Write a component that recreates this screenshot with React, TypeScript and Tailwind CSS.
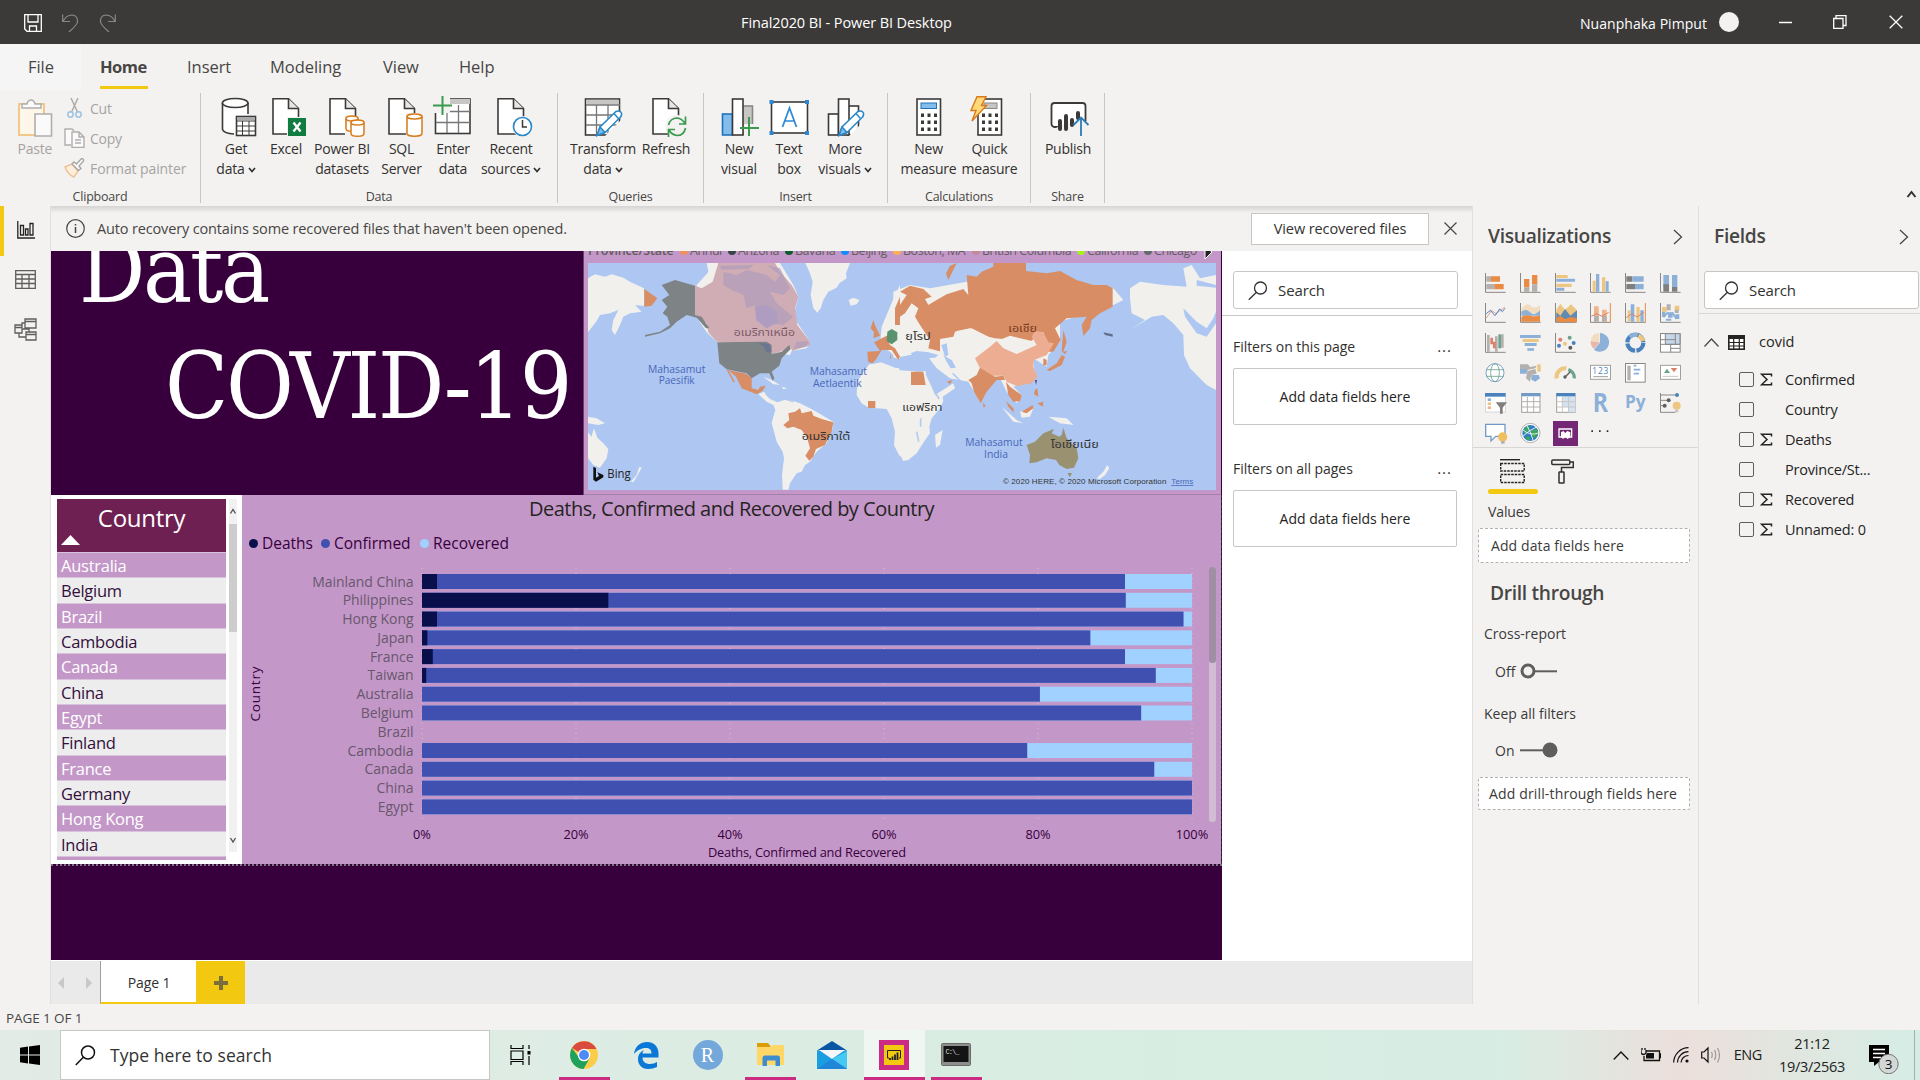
import React from "react";

type Kids = { children?: React.ReactNode };

/* ---------- ribbon ---------- */

const INK = "#3b3a39";

function Doc() {
  return (
    <g>
      <path d="M7 2.7H22.5L32.5 12.5V38H7Z" fill="#fff" stroke={INK} strokeWidth="1.6" />
      <path d="M22.5 2.7V12.5H32.5" fill="#e8e6e4" stroke={INK} strokeWidth="1.6" />
    </g>
  );
}

function Can({ x, y, w, h }: { x: number; y: number; w: number; h: number }) {
  return (
    <g fill="#fff" stroke="#d87a1a" strokeWidth="1.5">
      <path d={`M${x} ${y + 2.5}V${y + h - 2.5}a${w / 2} 2.8 0 0 0 ${w} 0V${y + 2.5}`} />
      <ellipse cx={x + w / 2} cy={y + 2.5} rx={w / 2} ry="2.5" />
    </g>
  );
}

function Pencil() {
  return (
    <g stroke="#2b88c8" strokeWidth="1.5">
      <path d="M14 39.5L17 31L33 15.5Q37 14 38.5 17Q39 20 37 21.5L22 36.5Z" fill="#fff" />
      <path d="M14 39.5L17 31L22 36.5Z" fill="#83bdec" />
      <path d="M31 17.5L35.5 22.5" />
    </g>
  );
}

const ribbonIcons: Record<string, React.ReactNode> = {
  get: (
    <g stroke={INK} strokeWidth="1.6">
      <path d="M6.5 7V33.5Q8 37.5 19 38H20V20H31.500V7" fill="#fff" stroke="none" />
      <path d="M6.500 7V33.500Q8 37.500 18 38M32 7V18" fill="none" />
      <ellipse cx="19.2" cy="7" rx="12.800" ry="4.500" fill="#fff" />
      <rect x="20.500" y="20.500" width="19" height="19" fill="#fff" />
      <rect x="21" y="21" width="18" height="3" fill="#aaa" stroke="none" />
      <path d="M20 25H40M20 30H40M20 35H40M26.500 25V40M33 25V40" strokeWidth="1" />
    </g>
  ),
  excel: (
    <g>
      <Doc />
      <rect x="21" y="21" width="20" height="20" fill="#f3f2f1" />
      <rect x="22" y="22" width="18" height="18" fill="#107c41" />
      <path d="M27.500 26.500L34.500 35.500M34.500 26.500L27.500 35.500" stroke="#fff" strokeWidth="2.300" />
    </g>
  ),
  sets: (
    <g transform="translate(1 0)">
      <Doc />
      <rect x="22" y="20" width="18" height="20" fill="#f3f2f1" />
      <Can x={23} y={20} w={12} h={15} />
      <Can x={28} y={24} w={13} h={16} />
    </g>
  ),
  sql: (
    <g>
      <Doc />
      <rect x="24" y="17" width="17" height="23" fill="#f3f2f1" />
      <Can x={25} y={18} w={15} h={22} />
    </g>
  ),
  enter: (
    <g>
      <rect x="2.500" y="3" width="34.500" height="34.500" fill="#fff" stroke={INK} strokeWidth="1.600" />
      <path d="M14 3H37V8H14Z" fill="#c8c6c4" />
      <path d="M3 15.500H37M3 26.500H37M14 9V37M25.500 9V37" stroke="#777" strokeWidth="1.300" />
      <path d="M0 0H17V17H0Z" fill="#f3f2f1" />
      <path d="M9.500 0V19M0 9.500H19" stroke="#3a9a4e" strokeWidth="2" />
    </g>
  ),
  recent: (
    <g>
      <Doc />
      <circle cx="31.500" cy="30.500" r="10.500" fill="#f3f2f1" />
      <circle cx="31.500" cy="30.500" r="9" fill="#fff" stroke="#2b88c8" strokeWidth="1.600" />
      <path d="M31.500 24V31H36" fill="none" stroke={INK} strokeWidth="1.500" />
    </g>
  ),
  transform: (
    <g>
      <rect x="2.500" y="3" width="34" height="36" fill="#fff" stroke={INK} strokeWidth="1.600" />
      <path d="M3.300 3.800H35.700V8.500H3.300Z" fill="#c8c6c4" />
      <path d="M3 9H37M3 19H37M3 29H37M13.500 9V39M25 9V39" stroke="#777" strokeWidth="1.300" />
      <path d="M22 40L40 22V40Z" fill="#f3f2f1" />
      <Pencil />
    </g>
  ),
  refresh: (
    <g>
      <Doc />
      <circle cx="31" cy="30.500" r="11.500" fill="#f3f2f1" />
      <g fill="none" stroke="#3a9a4e" strokeWidth="1.700">
        <path d="M22.500 29Q24.500 22 31 22Q36 22.500 39 27.500M39.500 20.500V28H33" />
        <path d="M39.500 32Q38 39.500 31 39.500Q26 39 23 34M22.500 41V33.500H29" />
      </g>
    </g>
  ),
  visual: (
    <g strokeWidth="1.600">
      <rect x="23" y="10" width="10.500" height="28" fill="#c8c6c4" stroke="#8a8886" />
      <rect x="3.500" y="18" width="10" height="21" fill="#83bdec" stroke="#2072b8" />
      <rect x="13.500" y="3" width="10.500" height="36" fill="#fff" stroke={INK} />
      <path d="M25 28H40V40H25Z" fill="#f3f2f1" />
      <path d="M30 21V40M21 32H40" stroke="#3a9a4e" strokeWidth="2" />
    </g>
  ),
  text: (
    <g>
      <rect x="2.500" y="6" width="36" height="31" fill="#fff" stroke={INK} strokeWidth="1.600" />
      <path d="M0.500 4H4.500V8H0.500ZM36 4H40V8H36ZM0.500 35H4.500V39H0.500ZM36 35H40V39H36Z" fill="#2b88d8" />
      <path d="M13.500 31L20.500 12L27.500 31M15.800 25H25.200" fill="none" stroke="#2b88d8" strokeWidth="1.700" />
    </g>
  ),
  more: (
    <g stroke={INK} strokeWidth="1.600" fill="#fff">
      <rect x="3.500" y="18" width="10" height="21" />
      <rect x="23" y="10" width="10.500" height="29" />
      <rect x="13.500" y="3" width="10.500" height="36" />
      <path d="M24 40L40 24V40Z" fill="#f3f2f1" stroke="none" />
      <Pencil />
    </g>
  ),
  measure: (
    <g>
      <rect x="8" y="3" width="23.500" height="36" fill="#fff" stroke={INK} strokeWidth="1.600" />
      <rect x="12" y="7" width="15.500" height="5.500" fill="#83bdec" stroke="#2072b8" />
      <path
        d="M12 17.500H15V21H12ZM18.500 17.500H21.500V21H18.500ZM25 17.500H28V21H25ZM12 24.500H15V28H12ZM18.500 24.500H21.500V28H18.500ZM25 24.500H28V28H25ZM12 31.500H15V35H12ZM18.500 31.500H21.500V35H18.500ZM25 31.500H28V35H25Z"
        fill={INK}
      />
    </g>
  ),
  quick: (
    <g transform="translate(-1 0)">
      <rect x="9" y="3" width="23.500" height="36" fill="#fff" stroke={INK} strokeWidth="1.600" />
      <rect x="15" y="7" width="13" height="5.500" fill="#c8c6c4" stroke="#8a8886" />
      <path
        d="M13 17.500H16V21H13ZM19.500 17.500H22.500V21H19.500ZM26 17.500H29V21H26ZM13 24.500H16V28H13ZM19.500 24.500H22.500V28H19.500ZM26 24.500H29V28H26ZM13 31.500H16V35H13ZM19.500 31.500H22.500V35H19.500ZM26 31.500H29V35H26Z"
        fill={INK}
      />
      <path d="M0 0H17L11 10L16 10L2 27V0Z" fill="#f3f2f1" />
      <path d="M8 .8H17L12.500 9.500H17.500L3 25L7 14.500H2Z" fill="#ffd979" stroke="#d87a1a" strokeWidth="1.400" />
    </g>
  ),
  publish: (
    <g fill="none" stroke={INK}>
      <rect x="3.500" y="7" width="34" height="24" rx="3" fill="#fff" strokeWidth="1.800" />
      <path d="M8 32H40V25H22Z" fill="#f3f2f1" stroke="none" />
      <path d="M12 25V33M18 20V33M24 24V29M30 17V22" strokeWidth="4" strokeLinecap="round" />
      <path d="M33 40V22M25.500 29L33 21.500L40.500 29" stroke="#2b7cb8" strokeWidth="1.800" />
    </g>
  ),
};

function Caret() {
  return (
    <svg width="8" height="6" viewBox="0 0 8 6" className="ml-[3px] inline-block">
      <path d="M1 1L4 4.500L7 1" fill="none" stroke="#323130" strokeWidth="1.700" />
    </svg>
  );
}

type Btn = { icon: string; l1: string; l2?: string; w: string; caret?: boolean };

function RibbonButton({ icon, l1, l2, w, caret }: Btn) {
  return (
    <div className={`flex shrink-0 flex-col items-center whitespace-nowrap ${w}`}>
      <svg width="40" height="43" viewBox="0 0 40 43" className="overflow-visible">
        {ribbonIcons[icon]}
      </svg>
      <div className="text-[14px] leading-5 tracking-[-0.25px] text-[#323130]">{l1}</div>
      {l2 && (
        <div className="text-[14px] leading-5 tracking-[-0.2px] text-[#323130]">
          {l2}
          {caret && <Caret />}
        </div>
      )}
    </div>
  );
}

const groups: { name: string; w: string; pad: string; items: Btn[] }[] = [
  {
    name: "Data",
    w: "w-[357px]",
    pad: "pl-[10px]",
    items: [
      { icon: "get", l1: "Get", l2: "data", caret: true, w: "w-[50px]" },
      { icon: "excel", l1: "Excel", w: "w-[50px]" },
      { icon: "sets", l1: "Power BI", l2: "datasets", w: "w-[62px]" },
      { icon: "sql", l1: "SQL", l2: "Server", w: "w-[57px]" },
      { icon: "enter", l1: "Enter", l2: "data", w: "w-[46px]" },
      { icon: "recent", l1: "Recent", l2: "sources", caret: true, w: "w-[70px]" },
    ],
  },
  {
    name: "Queries",
    w: "w-[146px]",
    pad: "pl-[8px]",
    items: [
      { icon: "transform", l1: "Transform", l2: "data", caret: true, w: "w-[74px]" },
      { icon: "refresh", l1: "Refresh", w: "w-[52px]" },
    ],
  },
  {
    name: "Insert",
    w: "w-[184px]",
    pad: "pl-[10px]",
    items: [
      { icon: "visual", l1: "New", l2: "visual", w: "w-[50px]" },
      { icon: "text", l1: "Text", l2: "box", w: "w-[50px]" },
      { icon: "more", l1: "More", l2: "visuals", caret: true, w: "w-[62px]" },
    ],
  },
  {
    name: "Calculations",
    w: "w-[143px]",
    pad: "pl-[10px]",
    items: [
      { icon: "measure", l1: "New", l2: "measure", w: "w-[61px]" },
      { icon: "quick", l1: "Quick", l2: "measure", w: "w-[61px]" },
    ],
  },
  {
    name: "Share",
    w: "w-[74px]",
    pad: "pl-[6px]",
    items: [{ icon: "publish", l1: "Publish", w: "w-[62px]" }],
  },
];

function GroupLabel({ children }: Kids) {
  return (
    <div className="-mt-[4px] pt-px text-center text-[12.500px] leading-[22px] tracking-[-0.2px] text-[#484644]">{children}</div>
  );
}

function Ribbon() {
  return (
    <div className="flex h-[116px] bg-[#f3f2f1] pt-[3px]">
      <div className="flex h-[110px] w-[201px] flex-col border-r border-[#c8c6c4]">
        <div className="flex h-[96px] shrink-0 text-[14px] tracking-[-0.25px] text-[#a6a4a2]">
          <div className="flex w-[52px] flex-col items-end pt-[6px] pl-[18px]">
            <svg width="36" height="40" viewBox="3 0 36 40" className="shrink-0 self-start overflow-visible">
              <path d="M4 5H29V36H4Z" fill="#fdf6e9" stroke="#f0c88c" strokeWidth="2" />
              <path d="M7 9V5H12Q13 1 16 1Q19 1 20 5H26V9Z" fill="#fafafa" stroke="#b0aeac" strokeWidth="1.500" />
              <path d="M20 15H36.500V37H20Z" fill="#fafafa" stroke="#b0aeac" strokeWidth="1.600" />
            </svg>
            <div className="leading-5">Paste</div>
          </div>
          <div className="flex flex-col pl-[12px]">
            <div className="flex h-[30px] items-center gap-[5px]">
              <svg width="21" height="20" viewBox="0 0 21 20">
                <path d="M7 0L13.500 14M14 0L7.500 14" stroke="#aaa8a6" strokeWidth="1.400" />
                <g fill="none" stroke="#9cc3e0" strokeWidth="1.500">
                  <circle cx="6.500" cy="16.500" r="2.700" />
                  <circle cx="14.500" cy="16.500" r="2.700" />
                </g>
              </svg>
              Cut
            </div>
            <div className="flex h-[30px] items-center gap-[5px]">
              <svg width="21" height="20" viewBox="0 0 21 20" fill="#fafafa" stroke="#b0aeac" strokeWidth="1.400">
                <path d="M7 17H1V1H8L10 3" />
                <path d="M8 4H15L20 9V19.500H8ZM15 4V9H20M11 12H17M11 15H17" />
              </svg>
              Copy
            </div>
            <div className="flex h-[30px] items-center gap-[5px]">
              <svg width="21" height="20" viewBox="0 0 21 20">
                <path d="M1 9L8 6L14 13L10 19Q4 17 1 9Z" fill="#fdeedd" stroke="#efc190" strokeWidth="1.400" />
                <path d="M8 6L10 4L12.500 6L17 1Q20 0 19.500 3L15 8L17 10.500L14.500 12.500Z" fill="#fafafa" stroke="#a8a6a4" strokeWidth="1.400" />
              </svg>
              <span className="whitespace-nowrap tracking-[-0.1px]">Format painter</span>
            </div>
          </div>
        </div>
        <GroupLabel>Clipboard</GroupLabel>
      </div>
      {groups.map((g) => (
        <div key={g.name} className={`flex h-[110px] flex-col border-r border-[#c8c6c4] ${g.w}`}>
          <div className={`flex h-[96px] shrink-0 pt-[3px] ${g.pad}`}>
            {g.items.map((b) => (
              <RibbonButton key={b.icon} {...b} />
            ))}
          </div>
          <GroupLabel>{g.name}</GroupLabel>
        </div>
      ))}
      <div className="flex flex-1 items-end justify-end pr-[3px] pb-[6px]">
        <svg width="11" height="12" viewBox="0 0 11 12">
          <path d="M1.500 9L5.500 4L9.500 9" fill="none" stroke="#323130" strokeWidth="2" />
        </svg>
      </div>
    </div>
  );
}

/* ---------- map ---------- */

const LAND = "#f1f0ec";
const ORANGE = "#d88d64";

function WorldMap() {
  return (
    <svg width="628" height="227" viewBox="24 54 1884 681" preserveAspectRatio="none" className="block">
      <rect x="24" y="54" width="1884" height="681" fill="#adc7f2" />
      <g fill={LAND}>
        <path d="M24 100L45 88L75 95L95 88L130 98L150 110L192 130V183L165 180L185 200L150 205L130 215L120 240L105 270L95 255L100 225L115 195L90 205L60 210L50 228L24 262Z" />
        <path d="M24 515L50 520L75 535L55 540L24 535ZM24 562L34 575L42 550L52 578L70 595L85 612L80 640L60 668L40 660L24 640Z" />
        <path d="M152 710L170 690L178 665L185 668L170 695L160 712Z" />
        <path d="M676 54H810L798 85L800 100L778 115L770 128L745 140L730 165L722 190L712 203L700 190L692 150L698 110L688 80Z" />
        <path d="M806 165L820 158L838 165L830 178L812 182Z" />
        <path d="M535 448L552 440L560 452L570 462L592 472L620 463L640 468L660 475L700 495L760 530L758 550L740 595L710 620L690 650L675 660L665 680L650 685L640 700L630 715L625 734H608L606 690L612 640L608 620L590 590L575 535L580 515L586 495L580 480L560 470Z" />
        <path d="M550 395L575 405L600 420L580 418ZM605 425L622 430L610 433Z" />
        <path d="M868 358L905 352L945 352L960 375V635L952 620L942 600L945 560L935 520L920 492L890 490L866 488L845 475L830 450L832 410L850 380Z" />
        <path d="M380 54L415 54L400 100L392 115Z" />
        <path d="M410 54H600L640 120L655 155L640 215L690 290L680 310L635 318L630 330L570 325L412 292L380 262L345 210L350 120Z" />
        <path d="M905 245L945 150L960 120V350L930 320L900 300Z" />
      </g>
      <g transform="translate(960 0)" fill={LAND}>
        <path d="M-20 140L30 120L90 130L200 110L640 130L670 165L640 180L480 230L480 290L445 330L440 365L400 340L405 400L340 425L365 450L350 475L320 440L300 400L255 420L240 470L205 410L150 400L110 370L80 330L30 330L-20 340Z" />
        <path d="M-10 375L30 378L75 375L105 450L160 415L165 430L128 455L130 468L120 490L95 520L88 545L90 565L72 590L50 625L25 645L10 648L0 630L-10 560Z" />
        <path d="M105 570L128 555L120 600L108 608Z" />
        <path d="M305 485L350 525L370 535L340 530ZM360 500L400 490L390 515L365 518ZM445 515L500 520L520 540L480 535Z" />
        <path d="M590 700L610 680L622 660L628 670L615 690L600 702Z" />
        <path d="M690 130L720 110L790 120L860 125L850 70L875 60L900 100L948 90V435L920 420L870 370L852 330L850 270L820 235L790 210L755 215L690 255L735 225L695 205L690 160Z" />
      </g>
      <g fill="#adc7f2">
        <path d="M992 325L1010 318L1045 322L1075 330L1065 338L1030 340L1000 336ZM1090 330L1112 325L1118 350L1128 368L1112 370L1100 350Z" />
        <path d="M945 345L985 335L1000 352L1030 355L1040 378L1010 380L985 372L945 368L900 350L880 358L925 325L940 335Z" />
        <path d="M1810 190L1850 230L1880 250L1900 220L1908 200V235L1880 275L1850 265L1815 215ZM1850 105L1908 120V128L1850 122Z" />
      </g>
      <g stroke="#adc7f2" strokeWidth="5" fill="none" opacity=".9">
        <path d="M1038 385L1070 450L1078 462M1118 385L1145 412M1022 520V545M1010 560L1016 590M610 460L640 470" />
      </g>
      {/* North America */}
      <path d="M415 54H585L600 80L635 120L655 155L645 190L652 240L690 290V300L637 318L630 305L600 320L575 327L570 300L410 290L385 262L380 235L345 210V122L365 130L398 110Z" fill="#d0adb5" />
      <path d="M430 80L470 90L500 75L560 90L585 110L600 90L560 60L600 70L630 130L610 150L570 140L590 175L640 215L610 240L575 235L560 250L530 225L525 180L500 190L490 150L455 135L430 120ZM650 290L685 288L680 305L640 312ZM418 62L520 60L505 72L425 74Z" fill="#b19dbc" opacity=".75" />
      <path d="M525 185L560 180L590 200L592 235L560 250L528 225Z" fill="#ab9cc2" opacity=".8" />
      <path d="M245 120L285 105L345 122V210L365 215L388 250L378 250L350 218L320 210L290 230L270 250L240 265L195 275V270L240 260L270 240L262 215L248 205L262 185L245 165L268 150Z" fill="#7e8385" />
      <path d="M412 292L560 290L575 300L575 327L605 320L628 300L632 312L605 340L598 362L575 380L583 400L578 407L568 385L540 385L515 400L500 385L440 373L418 355Z" fill="#7e8385" />
      <path d="M535 294L568 296L574 322L560 322L552 305Z" fill="#6b7694" />
      <path d="M440 374L498 386L515 400V430L535 435L540 425L557 422L548 437L530 448L485 430L468 395L445 375L465 412L460 412Z" fill={ORANGE} />
      <path d="M193 132L232 160L215 182L193 185Z" fill={ORANGE} />
      {/* South America and Africa */}
      <path d="M610 540L628 525L625 505L645 500L660 490L665 505L695 498L700 512L725 522L760 532L755 560L735 600L708 612L700 635L688 647L676 632L690 610L682 580L665 555L640 545L622 550Z" fill={ORANGE} />
      <path d="M864 468H886V489H864Z" fill={ORANGE} />
      {/* Europe */}
      <path d="M880 225L885 240L900 272L880 280L882 262L872 250ZM862 320L900 318L882 292L920 272L930 300L945 310L960 335L955 345L935 315L905 315L890 340L878 355L864 350ZM930 325L934 340H930ZM945 240V190L960 155V240Z" fill={ORANGE} />
      <path d="M922 260L935 252L952 262V285L935 298L920 288Z" fill="#5a9270" />
      <g transform="translate(960 0)">
        <path
          d="M0 140L30 122L70 132L95 155L75 162L85 180L110 165L140 148L190 132L205 150L200 90L230 95L245 80L280 65V54H378V78L440 85L480 78L530 105L580 120L620 120L638 130V185L600 205L575 225L570 250L550 273L545 240L560 215L500 220L465 250L482 285L460 320L440 320L430 260L390 290L285 280L240 270L210 250L165 260L160 275L120 282L125 320L85 310L90 285L60 240L45 215L55 190L35 175L15 205L0 215V180L20 150Z"
          fill={ORANGE}
        />
        <path d="M145 105L138 85L150 62L170 54L155 85Z" fill={ORANGE} />
        <path d="M120 285L165 278L170 258L215 250L285 285L272 300L235 325L225 345L235 370L200 372L120 325Z" fill={LAND} />
        <path d="M124 300L140 295L145 330L135 335Z" fill="#adc7f2" />
        <path d="M285 290L330 272L395 288L405 300L350 330L300 312Z" fill={LAND} />
        <path d="M225 340L270 305L290 288L310 310L350 327L410 300L395 275L405 258L430 262L445 292L462 295L440 330L402 345L400 365L412 395L395 415L350 423L320 410L310 392L280 392L240 370Z" fill="#edad92" />
        <path d="M240 368L285 395L310 392L315 405L290 405L260 440L242 475L222 440L215 415L205 405L230 390ZM250 472L257 485L250 487ZM318 410L330 425L365 450L360 468L340 470L325 450ZM318 468L340 490L342 503L325 485ZM365 500L398 480L400 490L380 505ZM405 435L412 430L415 455L402 448ZM412 475L430 470L428 485ZM430 340L440 345V360L430 362ZM440 375L470 355L485 330L495 335L485 360L450 378ZM490 255L500 290L490 320L502 318L495 328L485 318Z" fill={ORANGE} />
        <path d="M33 380H70L77 420H33ZM140 410L158 405L150 417Z" fill={ORANGE} />
        <path d="M610 262L638 268V275L615 270Z" fill="#60708a" />
        <path d="M405 405L411 405L408 420Z" fill="#56437a" />
        <path d="M380 600L405 590L430 565L462 552L455 565L478 575L485 570L490 548L500 580L530 610L535 640L522 668L500 672L478 660L468 645L440 640L410 652L388 655L390 630ZM502 684H516L510 697Z" fill="#9a9171" />
      </g>
      <g fontFamily='"Open Sans", sans-serif' fontSize="32" fill="#4a66b8" textAnchor="middle" lengthAdjust="spacingAndGlyphs">
        <text x="290" y="384" textLength="172" lengthAdjust="spacingAndGlyphs">Mahasamut</text>
        <text x="290" y="418" textLength="108" lengthAdjust="spacingAndGlyphs">Paesifik</text>
        <text x="775" y="390" textLength="172" lengthAdjust="spacingAndGlyphs">Mahasamut</text>
        <text x="772" y="427" textLength="146" lengthAdjust="spacingAndGlyphs">Aetlaentik</text>
        <text x="1242" y="603" textLength="172" lengthAdjust="spacingAndGlyphs">Mahasamut</text>
        <text x="1248" y="638" textLength="72" lengthAdjust="spacingAndGlyphs">India</text>
      </g>
      <g fontFamily='"Noto Sans Thai", "Noto Sans", sans-serif' fontSize="32" fill="#333" textAnchor="middle">
        <text x="553" y="272" fill="#7d5a66" textLength="184" lengthAdjust="spacingAndGlyphs">อเมริกาเหนือ</text>
        <text x="738" y="584" textLength="146" lengthAdjust="spacingAndGlyphs">อเมริกาใต้</text>
        <text x="1014" y="286" textLength="76" lengthAdjust="spacingAndGlyphs">ยุโรป</text>
        <text x="1328" y="261" fill="#7a3a20" textLength="86" lengthAdjust="spacingAndGlyphs">เอเชีย</text>
        <text x="1027" y="497" textLength="120" lengthAdjust="spacingAndGlyphs">แอฟริกา</text>
        <text x="1484" y="610" textLength="144" lengthAdjust="spacingAndGlyphs">โอเชียเนีย</text>
      </g>
      <path d="M40 665L48 669V698L57 693L52 682L70 690V697L48 710L40 704Z" fill="#111" />
      <text x="82" y="700" fontFamily='"Open Sans", sans-serif' fontSize="36" fill="#222" textLength="70" lengthAdjust="spacingAndGlyphs">
        Bing
      </text>
      <text x="1269" y="717" fontFamily='"Liberation Sans", sans-serif' fontSize="24" fill="#333" textLength="490">© 2020 HERE, © 2020 Microsoft Corporation</text>
      <text x="1774" y="717" fontFamily='"Liberation Sans", sans-serif' fontSize="24" fill="#4a66b8" textDecoration="underline" textLength="66">Terms</text>
    </svg>
  );
}

const provinces: [string, string, string][] = [
  ["Anhui", "#f0905a", "w-[48px]"],
  ["Arizona", "#374649", "w-[57px]"],
  ["Bavaria", "#0e5a2a", "w-[56px]"],
  ["Beijing", "#118dff", "w-[52px]"],
  ["Boston, MA", "#ffb052", "w-[79px]"],
  ["British Columbia", "#c08a9a", "w-[105px]"],
  ["California", "#a6f01e", "w-[67px]"],
  ["Chicago", "#5f6b6d", "w-[60px]"],
];

function MapVisual() {
  return (
    <div className="h-[243px] w-[637px] bg-[#c497c9] pl-[4px]">
      <div className="flex h-[12px] items-end overflow-hidden pb-[3px] whitespace-nowrap text-[12.500px] leading-[18px] text-[#605e5c]">
        <span className="w-[92px] shrink-0 font-semibold tracking-[-0.2px]">Province/State</span>
        {provinces.map(([n, c, w]) => (
          <span key={n} className={`flex shrink-0 items-center gap-[2px] ${w}`}>
            <span className="h-2 w-2 shrink-0 rounded-full" style={{ backgroundColor: c }} />
            <span className="tracking-[-0.45px]">{n}</span>
          </span>
        ))}
        <svg width="10" height="14" viewBox="0 0 10 14" className="shrink-0">
          <path d="M1 0L8 6L1 13Z" fill="#222" stroke="#fff" />
        </svg>
      </div>
      <WorldMap />
    </div>
  );
}

/* ---------- table and chart ---------- */

const countries = ["Australia", "Belgium", "Brazil", "Cambodia", "Canada", "China", "Egypt", "Finland", "France", "Germany", "Hong Kong", "India"];

function CountryTable() {
  return (
    <div className="flex h-[369px] w-[191px] shrink-0 gap-[3px] bg-white pt-[4px] pl-[6px]">
      <div className="h-[361px] w-[169px] overflow-hidden">
        <div className="h-[53px] bg-[#6f2052] pt-px text-center text-[24px] leading-[35px] tracking-[-0.3px] text-white">
          Country
          <svg width="19" height="10" viewBox="0 0 19 10" className="ml-1 block">
            <path d="M0 10L9.500 0L19 10Z" fill="#fff" />
          </svg>
        </div>
        {countries.map((c, i) => (
          <div
            key={c}
            className={`h-[25.350px] border-t border-[#d9c3dc] pl-[4px] text-[16.500px] leading-[25px] tracking-[-0.25px] ${
              i % 2 ? "bg-[#ededed] text-[#33103c]" : "bg-[#c497c9] text-white"
            }`}
          >
            {c}
          </div>
        ))}
        <div className="h-[4px] border-t border-[#d9c3dc] bg-[#c497c9]" />
      </div>
      <div className="flex h-[353px] w-[8px] flex-col items-center bg-[#f1f1f1]">
        <svg width="8" height="25" viewBox="0 0 8 25">
          <path d="M1.500 14.500L4 10.500L6.500 14.500" fill="none" stroke="#505050" strokeWidth="1.300" />
        </svg>
        <div className="h-[108px] w-full bg-[#cdcdcd]" />
        <svg width="8" height="208" viewBox="0 0 8 208" className="mt-auto">
          <path d="M1.500 194L4 198L6.500 194" fill="none" stroke="#505050" strokeWidth="1.300" />
        </svg>
      </div>
    </div>
  );
}

const bars: [string, number, number][] = [
  ["Mainland China", 1.95, 91.3],
  ["Philippines", 24.2, 91.4],
  ["Hong Kong", 1.95, 98.9],
  ["Japan", 0.7, 86.8],
  ["France", 1.4, 91.3],
  ["Taiwan", 0.55, 95.3],
  ["Australia", 0, 80.25],
  ["Belgium", 0, 93.4],
  ["Brazil", 0, 0],
  ["Cambodia", 0, 78.6],
  ["Canada", 0, 95.1],
  ["China", 0, 100],
  ["Egypt", 0, 100],
];

const legend: [string, string, string][] = [
  ["Deaths", "bg-[#080f4b]", "w-[72px]"],
  ["Confirmed", "bg-[#4050b0]", "w-[99px]"],
  ["Recovered", "bg-[#a0d1ff]", "w-[90px]"],
];

function Chart() {
  const X0 = 180;
  const W = 770;
  return (
    <div className="h-[369px] w-[979px] overflow-hidden bg-[#c497c9]">
      <div className="h-[29px] text-center text-[20px] leading-[28px] tracking-[-0.5px] text-[#252423]">
        Deaths, Confirmed and Recovered by Country
      </div>
      <div className="flex h-[38px] items-center pt-px pl-[7px] text-[15.500px] text-[#37003d]">
        {legend.map(([n, c, w]) => (
          <span key={n} className={`flex items-center gap-[4px] ${w}`}>
            <span className={`h-[9px] w-[9px] shrink-0 rounded-full ${c}`} />
            {n}
          </span>
        ))}
      </div>
      <svg width="979" height="302" viewBox="0 67 979 302" fontFamily='"Open Sans", sans-serif' fontSize="14">
        {[0, 1, 2, 3, 4, 5].map((k) => (
          <g key={k}>
            <path d={`M${X0 + k * 154} 73V328`} stroke="#d9bfdc" strokeDasharray="1 4" />
            <text x={X0 + k * 154} y="343.500" textAnchor="middle" fontSize="12.800" fill="#37003d">
              {k * 20}%
            </text>
          </g>
        ))}
        {bars.map(([n, d, c], i) => {
          const y = 79 + i * 18.78;
          return (
            <g key={n}>
              <text x="171.500" y={y + 12.5} textAnchor="end" fill="#67586b" letterSpacing="-0.050">
                {n}
              </text>
              {c > 0 && (
                <>
                  <rect x={X0} y={y} width={W} height="15" fill="#a0d1ff" />
                  <rect x={X0} y={y} width={(W * c) / 100} height="15" fill="#4050b0" />
                  <rect x={X0} y={y} width={(W * d) / 100} height="15" fill="#080f4b" />
                </>
              )}
            </g>
          );
        })}
        <text x="565" y="361.500" textAnchor="middle" fontSize="12.800" fill="#37003d" textLength="198">
          Deaths, Confirmed and Recovered
        </text>
        <text transform="translate(18 199) rotate(-90)" textAnchor="middle" fontSize="13.500" fill="#37003d" textLength="55">
          Country
        </text>
        <rect x="967" y="72" width="7" height="255" rx="3" fill="#d2bcd4" />
        <rect x="967" y="72" width="7" height="96" rx="3" fill="#a08ea3" />
      </svg>
    </div>
  );
}

/* ---------- side panes ---------- */

function Search({ w }: { w: string }) {
  return (
    <div className={`flex h-[38px] items-center rounded-[3px] border border-[#c8c6c4] bg-white pt-px pl-[14px] ${w}`}>
      <svg width="20" height="20" viewBox="0 0 20 20" fill="none" stroke="#323130" strokeWidth="1.300">
        <circle cx="12.500" cy="7" r="6" />
        <path d="M8.200 11.500L.8 18.800" />
      </svg>
      <span className="ml-[10px] text-[15px] tracking-[-0.1px] text-[#323130]">Search</span>
    </div>
  );
}

function FilterSection({ title }: { title: string }) {
  return (
    <>
      <div className="flex h-[22px] items-center justify-between pr-[20px] text-[14px] tracking-[-0.05px] text-[#323130]">
        {title}
        <span className="text-[15px] leading-4 tracking-[1px]">...</span>
      </div>
      <div className="mt-[11px] flex h-[57px] w-[224px] items-center justify-center rounded-[2px] border border-[#c8c6c4] text-[14px] text-[#252423]">
        Add data fields here
      </div>
    </>
  );
}

function FiltersPane() {
  return (
    <div className="h-[709px] w-[250px] bg-white pt-[20px]">
      <div className="pl-[11px]">
        <Search w="w-[225px]" />
      </div>
      <div className="mt-[6px] mb-[19px] h-px bg-[#c8c6c4]" />
      <div className="pl-[11px]">
        <FilterSection title="Filters on this page" />
        <div className="h-[32px]" />
        <FilterSection title="Filters on all pages" />
      </div>
    </div>
  );
}

const axis = <path d="M1.500 0V58H62" fill="none" stroke="#8a8886" strokeWidth="3" />;
const B = "#8cb0d8";
const O = "#e88b45";
const Y = "#edc681";
const G = "#7f7f7f";

const vizIcons: React.ReactNode[] = [
  <>{axis}<path d="M4 10H18V26H4ZM4 33H28V49H4Z" fill="#b3b0ad" /><path d="M18 10H45V26H18ZM28 33H56V49H28Z" fill={O} /></>,
  <>{axis}<path d="M12 18H28V43H12ZM36 6H52V34H36Z" fill={O} /><path d="M12 43H28V56H12ZM36 34H52V56H36Z" fill="#b3b0ad" /></>,
  <>{axis}<path d="M4 6H38V15H4ZM4 32H50V42H4Z" fill={Y} /><path d="M4 17H60V26H4ZM4 44H28V53H4Z" fill={B} /></>,
  <>{axis}<path d="M8 23H17V56H8ZM36 13H46V56H36Z" fill={Y} /><path d="M18 3H28V56H18ZM47 25H56V56H47Z" fill={B} /></>,
  <>{axis}<path d="M4 10H22V26H4ZM4 33H30V49H4Z" fill={G} /><path d="M22 10H56V26H22ZM30 33H56V49H30Z" fill={B} /></>,
  <>{axis}<path d="M10 6H27V42H10ZM36 6H52V42H36Z" fill={B} /><path d="M10 34H27V56H10ZM36 42H52V56H36Z" fill={G} /></>,
  <>{axis}<g fill="none" strokeWidth="3"><path d="M4 45L20 22L33 32L60 12" stroke="#e8a49a" /><path d="M4 32L16 22L30 38L44 18L52 26L60 16" stroke="#4b82be" /></g></>,
  <>{axis}<path d="M4 18Q20 -4 32 8T60 6V30H4Z" fill="#f1dcc0" /><path d="M4 26Q18 15 30 28T60 22V38H4Z" fill={B} /><path d="M4 42Q18 34 32 38T60 36V56H4Z" fill={O} /></>,
  <>{axis}<path d="M4 20L16 2L30 20L48 4L66 22V56H4Z" fill={Y} /><path d="M4 28L16 38L30 18L46 38L66 22V58H4Z" fill="#5e8ab4" /><path d="M4 46L16 38L30 48L46 42L66 46V58H4Z" fill={O} /></>,
  <>{axis}<path d="M12 10H26V56H12ZM36 20H50V56H36Z" fill="#efb489" /><path d="M12 38H26V56H12ZM36 38H50V56H36Z" fill="#b3b0ad" /><path d="M4 40L20 32L36 40L56 28" fill="none" stroke="#dd7f6c" strokeWidth="3" /><path d="M61 0V58" stroke={O} strokeWidth="3" /></>,
  <>{axis}<path d="M8 22H16V56H8ZM34 12H44V56H34Z" fill={Y} /><path d="M17 4H28V56H17ZM46 22H56V56H46Z" fill={B} /><path d="M4 44L20 32L36 42L56 28" fill="none" stroke="#dd7f6c" strokeWidth="3" /><path d="M61 0V58" stroke={O} strokeWidth="3" /></>,
  <>{axis}<path d="M6 12H20V26H6ZM44 8H58V22H44Z" fill={Y} /><path d="M20 4H32V22H20ZM44 20H56V30H44Z" fill="#b3b0ad" /><path d="M6 26H16V42H6ZM24 28H38V44H24ZM46 34H58V48H46Z" fill={B} /><path d="M10 42L24 28M36 28L50 48M18 50H34" stroke={B} strokeWidth="6" /></>,
  <>{axis}<path d="M6 6H14V56H6ZM30 10H38V56H30ZM48 4H56V44H48Z" fill="#b3b0ad" /><path d="M16 14H24V34H16ZM24 26H32V46H24Z" fill="#dd7f6c" /><path d="M40 4H48V46H40Z" fill="#6ba38e" /></>,
  <><path d="M0 6H62V15H0ZM14 30H50V39H14ZM22 46H42V53H22Z" fill={B} /><path d="M8 18H56V27H8Z" fill={Y} /></>,
  <>{axis}<circle cx="16" cy="20" r="6" fill="#dd7f6c" /><circle cx="44" cy="14" r="6" fill="#6ba38e" /><circle cx="30" cy="32" r="6" fill={Y} /><circle cx="12" cy="38" r="6" fill="#4b82be" /><circle cx="46" cy="44" r="6" fill="#605e5c" /><circle cx="56" cy="30" r="6" fill="#4b82be" /></>,
  <><path d="M30 0A28 28 0 1 1 12 50L30 28Z" fill={B} /><path d="M28 0V28L2 22A28 28 0 0 1 28 0Z" fill="#f1dcc0" /><path d="M2 24L28 28L12 48A28 28 0 0 1 2 24Z" fill="#e8b5a6" /></>,
  <g fill="none" strokeWidth="13"><circle cx="31" cy="29" r="24" stroke="#4b82be" strokeDasharray="34 4" /><path d="M14 12A24 24 0 0 1 38 6" stroke={B} /><path d="M40 8A24 24 0 0 1 54 24" stroke={Y} /></g>,
  <g stroke="#8a8886" strokeWidth="3"><rect x="1.500" y="1.500" width="59" height="56" fill="#fff" /><path d="M16 2H60V34H16Z" fill="#c5d6ea" /><path d="M2 20H16M2 34H60M46 2V34M16 20H46M32 34V58M32 46H60" fill="none" /></g>,
  <g fill="none" strokeWidth="2.500"><circle cx="30" cy="29" r="27" stroke="#5d8fbf" fill="#fff" /><ellipse cx="30" cy="29" rx="13" ry="27" stroke="#6ba38e" /><path d="M4 20H56M4 40H56" stroke="#6ba38e" /></g>,
  <><path d="M0 4H24L30 12L50 8L46 16L24 20L20 28H0Z" fill="#b3b0ad" /><path d="M0 18H20V32H0ZM34 36H56L60 46L46 56L34 50Z" fill={B} /><path d="M22 24L46 18L50 32L34 36L30 56L18 46Z" fill="#b3b0ad" /><path d="M52 4H62V26H52Z" fill={Y} /></>,
  <g fill="none" strokeWidth="10"><path d="M5 46A26 26 0 0 1 34 16" stroke={Y} strokeWidth="12" /><path d="M40 20A26 26 0 0 1 58 46" stroke="#6ba38e" strokeWidth="10" /><path d="M28 44L46 26" stroke="#605e5c" strokeWidth="4" /><circle cx="30" cy="42" r="3" stroke="#605e5c" strokeWidth="4" /></g>,
  <><rect x="1.500" y="7" width="60" height="42" fill="#fff" stroke="#a19f9d" strokeWidth="3" /><text x="31" y="32" textAnchor="middle" fontSize="25" fill="#4b82be" fontFamily='"Open Sans", sans-serif' textLength="48">123</text><path d="M10 41H54" stroke="#a19f9d" strokeWidth="3" /></>,
  <><rect x="1.500" y="1.500" width="59" height="56" fill="#fff" stroke="#8a8886" strokeWidth="3" /><path d="M7 8H17V52H7Z" fill="#b3b0ad" /><path d="M26 8H34M26 20H46M26 32H42" stroke={B} strokeWidth="5" /></>,
  <><rect x="1.500" y="7" width="60" height="42" fill="#fff" stroke="#a19f9d" strokeWidth="3" /><path d="M12 30L21 17L30 30Z" fill="#6ba38e" /><path d="M32 15H52L42 28Z" fill="#dd7f6c" /><path d="M8 40H54" stroke="#c8c6c4" strokeWidth="3" /></>,
  <><rect x="1.500" y="2" width="60" height="55" fill="#fff" stroke="#c8c6c4" strokeWidth="2" /><path d="M0 0H62V11H0Z" fill="#4b82be" /><path d="M8 16H18V24H8Z" fill={B} /><path d="M8 28H18V36H8Z" fill={Y} /><path d="M8 40H18V48H8Z" fill="#efb489" /><path d="M32 28H66L53 44V62H45V44Z" fill={G} /></>,
  <><rect x="5" y="2" width="55" height="56" fill="#fff" stroke="#a19f9d" strokeWidth="3" /><path d="M4 0H61V10H4Z" fill="#739ac6" /><path d="M5 26H60M5 42H60M22 12V58M41 12V58" stroke="#b3b0ad" strokeWidth="3" /></>,
  <><rect x="5" y="2" width="55" height="56" fill="#fff" stroke="#a19f9d" strokeWidth="3" /><path d="M24 10H60V58H40V42H24Z" fill="#d5e2f0" /><path d="M4 0H61V10H4Z" fill="#4b82be" /><path d="M5 26H60M5 42H60M22 12V58M41 12V58" stroke="#c8c6c4" strokeWidth="3" /></>,
  <text x="31" y="58" textAnchor="middle" fontSize="78" fontWeight="700" fill={B} fontFamily='"Open Sans", sans-serif' textLength="46" lengthAdjust="spacingAndGlyphs">R</text>,
  <text x="31" y="46" textAnchor="middle" fontSize="54" fontWeight="700" fill={B} fontFamily='"Open Sans", sans-serif' textLength="62" lengthAdjust="spacingAndGlyphs">Py</text>,
  <><path d="M1.500 0V58H46M3 6H50M3 22H24M3 38H14" fill="none" stroke="#8a8886" strokeWidth="3" /><circle cx="51" cy="6" r="6" fill="#4b82be" /><circle cx="26" cy="22" r="6" fill="#605e5c" /><circle cx="14" cy="38" r="6" fill="#605e5c" /><circle cx="50" cy="38" r="12" fill={Y} /><path d="M45 50H55V58H45Z" fill="#c8c6c4" /></>,
  <><path d="M2 4H60V40H32L18 54V40H2Z" fill="#fff" stroke="#739ac6" strokeWidth="4" /><circle cx="53" cy="42" r="14" fill="#f0c060" /><path d="M48 54H59V62H48Z" fill="#b3b0ad" /></>,
  <><circle cx="31" cy="30" r="29" fill="#fff" stroke="#b3b0ad" strokeWidth="3" /><circle cx="31" cy="30" r="24" fill="#2f7fc4" /><path d="M14 14L30 8L26 24L12 34ZM34 22L52 18L54 34L42 46L34 36ZM18 42L28 40L30 52L20 50Z" fill="#3fa75c" /><path d="M8 20Q30 40 56 30M20 6Q34 30 40 54M8 40Q30 20 50 12" fill="none" stroke="#fff" strokeWidth="2.500" /></>,
  <><path d="M-6 -6H69V69H-6Z" fill="#742774" /><path d="M12 18H50V42H12Z" fill="none" stroke="#fff" strokeWidth="4" /><path d="M18 28L25 24L31 30L37 24L46 28V42L38 48L31 42L24 48L18 42Z" fill="#fff" /></>,
  <path d="M4 22H9V27H4ZM27 22H32V27H27ZM50 22H55V27H50Z" fill="#323130" />,
];

function Heading({ children }: Kids) {
  return <div className="text-[19.200px] font-semibold tracking-[-0.3px] text-[#484644]">{children}</div>;
}

function Chevron() {
  return (
    <svg width="10" height="16" viewBox="0 0 10 16">
      <path d="M1 1L8.500 8L1 15" fill="none" stroke="#484644" strokeWidth="1.300" />
    </svg>
  );
}

function VisualizationsPane() {
  return (
    <div className="h-[798px] w-[227px] border-x border-[#e1dfdd] bg-[#f3f2f1]">
      <div className="flex h-[61px] items-center justify-between pr-[15px] pl-[15px]">
        <Heading>Visualizations</Heading>
        <Chevron />
      </div>
      <div className="mt-px grid h-[180px] grid-cols-[repeat(6,35px)] grid-rows-[repeat(6,30px)] border-b border-[#d9d7d5] pt-[5px] pl-[12px]">
        {vizIcons.map((icon, i) => (
          <svg key={i} width="21" height="20" viewBox="0 0 63 60" className="overflow-visible">
            {icon}
          </svg>
        ))}
      </div>
      <div className="flex h-[41px] gap-[26px] pt-[11px] pl-[27px]">
        <svg width="25" height="25" viewBox="0 0 25 25" fill="none" stroke="#252423" strokeWidth="1.400">
          <path d="M0 .7H20" />
          <rect x=".7" y="4.500" width="23.500" height="7.500" strokeDasharray="2.500 1" />
          <rect x=".7" y="15.500" width="23.500" height="8" strokeDasharray="2.500 1" />
        </svg>
        <svg width="23" height="25" viewBox="0 0 23 25" fill="none" stroke="#323130" strokeWidth="1.500">
          <rect x=".8" y="1" width="18" height="4.500" rx="1" />
          <path d="M19 3H22.300V8.500H10.500V13" />
          <rect x="8" y="13" width="5" height="11" rx=".5" />
        </svg>
      </div>
      <div className="ml-[15px] h-[5px] w-[50px] rounded-full bg-[#f2c811]" />
      <div className="mt-[8px] ml-[15px] text-[14px] leading-[20px] tracking-[-0.1px] text-[#3b3a39]">Values</div>
      <div className="mt-[6px] ml-[5px] flex h-[35px] w-[212px] items-center rounded-[2px] border border-dashed border-[#b3b0ad] bg-white pl-[12px] text-[14px] tracking-[0.1px] text-[#3b3a39]">
        Add data fields here
      </div>
      <div className="mt-[15px] ml-[17px] leading-[30px]">
        <Heading>Drill through</Heading>
      </div>
      <div className="mt-[15px] ml-[11px] text-[14px] leading-[22px] text-[#3b3a39]">Cross-report</div>
      <div className="mt-[16px] ml-[22px] flex h-[20px] items-center text-[14px] text-[#3b3a39]">
        <span className="w-[25px]">Off</span>
        <svg width="38" height="16" viewBox="0 0 38 16" fill="none" stroke="#605e5c">
          <circle cx="8" cy="8" r="6" strokeWidth="3" />
          <path d="M15 8.300H37" strokeWidth="2" />
        </svg>
      </div>
      <div className="mt-[23px] ml-[11px] text-[14px] leading-[20px] text-[#3b3a39]">Keep all filters</div>
      <div className="mt-[16px] mb-[17px] ml-[22px] flex h-[20px] items-center text-[14px] text-[#3b3a39]">
        <span className="w-[25px]">On</span>
        <svg width="38" height="16" viewBox="0 0 38 16">
          <path d="M0 8.300H30" stroke="#605e5c" strokeWidth="2" />
          <circle cx="30" cy="8" r="7.500" fill="#605e5c" />
        </svg>
      </div>
      <div className="ml-[5px] flex h-[33px] w-[212px] items-center rounded-[2px] border border-dashed border-[#b3b0ad] bg-white pl-[10px] text-[14px] tracking-[0.150px] whitespace-nowrap text-[#3b3a39]">
        Add drill-through fields here
      </div>
    </div>
  );
}

const fields: [string, boolean][] = [
  ["Confirmed", true],
  ["Country", false],
  ["Deaths", true],
  ["Province/St...", false],
  ["Recovered", true],
  ["Unnamed: 0", true],
];

function FieldsPane() {
  return (
    <div className="h-[798px] w-[221px] bg-[#f3f2f1]">
      <div className="flex h-[61px] items-center justify-between pr-[11px] pl-[15px]">
        <Heading>Fields</Heading>
        <Chevron />
      </div>
      <div className="mt-px border-b border-[#d9d7d5] pt-[3px] pb-[4px] pl-[5px]">
        <Search w="w-[215px]" />
      </div>
      <div className="flex h-[51px] items-center pt-[5px] pl-[5px] text-[14.500px] text-[#252423]">
        <svg width="15" height="9" viewBox="0 0 15 9">
          <path d="M.5 8.500L7.500 1L14.500 8.500" fill="none" stroke="#484644" strokeWidth="1.200" />
        </svg>
        <svg width="17" height="15" viewBox="0 0 17 15" className="mr-[14px] ml-[9px]">
          <rect x=".8" y=".8" width="15.400" height="13.400" fill="#fff" stroke="#252423" strokeWidth="1.600" />
          <path d="M0 0H17V4H0Z" fill="#252423" />
          <path d="M0 7.500H17M0 11H17M5.700 4V15M11.300 4V15" stroke="#252423" strokeWidth="1.200" />
        </svg>
        covid
      </div>
      {fields.map(([n, sum]) => (
        <div key={n} className="mb-px flex h-[29px] items-center pl-[40px] text-[14.500px] tracking-[-0.2px] text-[#252423]">
          <span className="h-[15px] w-[15px] rounded-[2px] border border-[#605e5c]" />
          <span className="ml-[6px] flex w-[25px]">
            {sum && (
              <svg width="13" height="13" viewBox="0 0 13 13">
                <path d="M11.500 3.500V1.200H1.500L7 6.500L1.500 11.800H11.500V9.500" fill="none" stroke="#252423" strokeWidth="1.500" />
              </svg>
            )}
          </span>
          {n}
        </div>
      ))}
    </div>
  );
}

/* ---------- taskbar ---------- */

function Slot({ w, on, children, bg }: Kids & { w: string; on?: boolean; bg?: string }) {
  return (
    <div className={`flex h-[50px] shrink-0 flex-col items-center ${w} ${bg ?? ""}`}>
      <div className="flex h-[47px] items-center pt-[3px]">{children}</div>
      {on && <div className="h-[3px] w-full bg-[#cb2b83]" />}
    </div>
  );
}

function Taskbar() {
  return (
    <div className="flex h-[50px] bg-linear-to-r from-[#e2ebe6] via-[#d8ede2] via-60% to-[#d5ede5]">
      <div className="flex w-[60px] items-center justify-center">
        <svg width="20" height="20" viewBox="0 0 20 20">
          <path d="M0 2.800L8 1.600V9.500H0ZM9 1.500L20 0V9.500H9ZM0 10.500H8V18.400L0 17.200ZM9 10.500H20V20L9 18.500Z" fill="#000" />
        </svg>
      </div>
      <div className="flex h-[50px] w-[430px] items-center border border-[#c4c8c6] bg-white pl-[14px]">
        <svg width="21" height="21" viewBox="0 0 21 21" fill="none" stroke="#111" strokeWidth="1.500">
          <circle cx="13" cy="7.500" r="6.500" />
          <path d="M8.300 12.300L.8 20" />
        </svg>
        <span className="ml-[14px] text-[17.500px] tracking-[0.050px] text-[#333]">Type here to search</span>
      </div>
      <Slot w="w-[60px]">
        <svg width="21" height="20" viewBox="0 0 21 20" fill="none" stroke="#000" strokeWidth="1.200">
          <path d="M1 0V3.500H13V0M1 20V16.500H13V20M1 6H13V14.500H1ZM19 0V4M19 11V20" />
          <path d="M17.500 6H20.500V9.500H17.500Z" fill="#000" stroke="none" />
        </svg>
      </Slot>
      <div className="w-[9px]" />
      <Slot w="w-[51px]" on>
        <svg width="28" height="28" viewBox="0 0 28 28" className="mr-[2px]">
          <circle cx="14" cy="14" r="14" fill="#fccd48" />
          <path d="M14 14L1.900 7A14 14 0 0 1 26.500 8H14Z" fill="#db4a3e" />
          <path d="M1.900 7A14 14 0 0 0 13.500 28L19.500 17.500L14 14L9 16.500Z" fill="#1fa05c" />
          <circle cx="14" cy="14" r="6.300" fill="#fff" />
          <circle cx="14" cy="14" r="5" fill="#4d8af5" />
        </svg>
      </Slot>
      <Slot w="w-[73px]">
        <svg width="25" height="27" viewBox="0 0 25 27">
          <path
            d="M0 12C1 4 6.500 0 13 0C21 0 25 6 24.500 12.500V15.500H8.500C8.500 20 12 22 16 22Q20 22 23 20V25Q19 27 14 27C7.500 27 4 22.500 4 17C4 12.500 6.500 10 10 8C8.800 9.500 8.500 10.500 8.500 11.500H17.500C17.500 7.500 15.500 6 12 6C7 6 3 8.500 0 12Z"
            fill="#0b78d7"
          />
        </svg>
      </Slot>
      <Slot w="w-[49px]">
        <div className="h-[30px] w-[30px] rounded-full bg-[#75a8da] text-center font-['Liberation_Serif',serif] text-[20px] leading-[30px] text-white">R</div>
      </Slot>
      <div className="w-[13px]" />
      <Slot w="w-[51px]" on>
        <svg width="28" height="24" viewBox="0 0 28 24">
          <path d="M0 0H11L13.500 3V5H0Z" fill="#dd9d08" />
          <path d="M0 4H14L16 2H27V22H0Z" fill="#ffd767" />
          <path d="M5.500 23V15Q5.500 12.500 8 12.500H20.500Q23 12.500 23 15V23H18.500V17.500H10V23Z" fill="#3c8ccf" />
        </svg>
      </Slot>
      <Slot w="w-[68px]">
        <svg width="30" height="28" viewBox="0 0 30 28" className="ml-[4px]">
          <path d="M0 9.500L15 0L30 9.500Z" fill="#0a56a4" />
          <path d="M0 9.500H30V28H0Z" fill="#1b9de2" />
          <path d="M2 9H28L15 18Z" fill="#f5f7fa" />
          <path d="M30 10L15 18L30 28Z" fill="#45c8f2" />
          <path d="M0 28L15 18L30 28Z" fill="#2087d8" />
        </svg>
      </Slot>
      <Slot w="w-[61px]" on bg="bg-[#f0f7f3]">
        <svg width="30" height="30" viewBox="0 0 30 30" className="mr-px">
          <path d="M0 0H30V30H0Z" fill="#cb2b83" />
          <path d="M5 5H25V25H5Z" fill="#f2c811" />
          <path d="M10 18H8.500V10.500H21.500V18H20" fill="none" stroke="#222" />
          <path d="M11 20V18M13.500 20V16.500M16 20V14.500M18.500 20V12.500" stroke="#222" strokeWidth="1.800" />
        </svg>
      </Slot>
      <div className="w-[6px]" />
      <Slot w="w-[51px]" on>
        <svg width="30" height="23" viewBox="0 0 30 23" className="mr-px -mt-px">
          <rect x=".5" y=".5" width="29" height="22" rx="1" fill="#8d8f8f" stroke="#6c6e6e" />
          <path d="M2.500 3H27.500V19H2.500Z" fill="#141414" />
          <text x="4.500" y="10.500" fontSize="7" fill="#ddd" fontFamily='"Liberation Mono", monospace' textLength="14">C:\_</text>
        </svg>
      </Slot>
      <div className="flex flex-1 items-center justify-end bg-linear-to-r from-transparent from-55% via-[#ecdfdb] via-75% to-transparent">
        <svg width="16" height="9" viewBox="0 0 16 9">
          <path d="M.7 8.500L8 1L15.300 8.500" fill="none" stroke="#111" strokeWidth="1.300" />
        </svg>
        <svg width="20" height="14" viewBox="0 0 20 14" className="ml-[12px]" fill="none" stroke="#111" strokeWidth="1.300">
          <path d="M5 3H18.500V12.500H3V8M18.500 6H19.700V9.500H18.500M0 2V5Q2.500 8 5 5V2M1 0V2M4 0V2" />
          <path d="M6 5H13V10.500H5V7Z" fill="#111" stroke="none" />
        </svg>
        <svg width="16" height="16" viewBox="0 0 16 16" className="ml-[12px]" fill="none" stroke="#111" strokeWidth="1.200">
          <path d="M.7 15.500A15 15 0 0 1 15.500 .7M4.500 15.500A11 11 0 0 1 15.500 4.700M8 15.500A7.500 7.500 0 0 1 15.500 8.500" />
          <circle cx="14" cy="14" r="1.600" fill="#111" stroke="none" />
        </svg>
        <svg width="21" height="18" viewBox="0 0 21 18" className="ml-[12px]" fill="none" strokeWidth="1.200">
          <path d="M.7 6H3L7 2V16L3 12H.7Z" stroke="#111" />
          <path d="M10.500 6Q12 9 10.500 12M13.500 4Q16 9 13.500 14M16.500 2Q20.500 9 16.500 16.500" stroke="#999" />
        </svg>
        <span className="ml-[12px] text-[14.500px] tracking-[-0.4px] text-[#222]">ENG</span>
        <div className="ml-[15px] w-[70px] text-center text-[14.500px] leading-[23px] tracking-[-0.3px] text-[#222]">
          <div>21:12</div>
          <div>19/3/2563</div>
        </div>
        <svg width="31" height="32" viewBox="0 0 31 32" className="mt-[5px] mr-[14px] ml-[22px]">
          <path d="M0 3H20V20H10L5 24V20H0Z" fill="#000" />
          <path d="M4 7.500H16M4 11.500H16M4 15.500H12" stroke="#fff" strokeWidth="1.300" />
          <circle cx="19.500" cy="22" r="9.700" fill="#d3d7d5" stroke="#777" />
          <text x="19.500" y="27" textAnchor="middle" fontSize="13.500" fontFamily='"Open Sans", sans-serif' fill="#111">3</text>
        </svg>
      </div>
      <div className="mr-[5px] w-px bg-[#9fb3ab]" />
    </div>
  );
}

/* ---------- page ---------- */

const tabs: [string, string][] = [
  ["Insert", "ml-[39px] w-[83px]"],
  ["Modeling", "w-[113px]"],
  ["View", "w-[76px]"],
  ["Help", ""],
];

export default function App() {
  return (
    <div className="h-[1080px] w-[1920px] overflow-hidden bg-[#f3f2f1] font-['Open_Sans',sans-serif]">
      <div className="flex h-[44px] items-center bg-[#3b3a38] text-white">
        <div className="flex w-[741px] items-center gap-[20px] pt-[2px] pl-[24px]">
          <svg width="18" height="18" viewBox="0 0 18 18" fill="none" stroke="#fff" strokeWidth="1.300">
            <path d="M.7 .7H17.300V17.300H3L.7 15ZM4 1V8H14V1M5.500 17V12H12.500V17" />
          </svg>
          <svg width="17" height="18" viewBox="0 0 17 18" fill="none" stroke="#8a8886" strokeWidth="1.200">
            <path d="M.7 .5V7.500H8M1 7.500Q4 1 10 1Q16 1.500 15.500 8Q15 11 7 18" />
          </svg>
          <svg width="17" height="18" viewBox="0 0 17 18" fill="none" stroke="#8a8886" strokeWidth="1.200">
            <path d="M16.300 .5V7.500H9M16 7.500Q13 1 7 1Q1 1.500 1.500 8Q2 11 10 18" />
          </svg>
        </div>
        <div className="flex-1 pt-[2px] text-[14.500px] tracking-[-0.1px]">Final2020 BI - Power BI Desktop</div>
        <div className="flex items-center pt-[2px] text-[14px] tracking-[0.050px]">Nuanphaka Pimput</div>
        <div className="ml-[12px] h-[20px] w-[20px] rounded-full bg-[#f3f2f1]" />
        <svg width="13" height="14" viewBox="0 0 13 14" className="ml-[40px]">
          <path d="M0 7.500H13" stroke="#fff" strokeWidth="1.500" />
        </svg>
        <svg width="14" height="14" viewBox="0 0 14 14" className="ml-[41px]" fill="none" stroke="#fff" strokeWidth="1.300">
          <path d="M.7 3.500H10V13.300H.7ZM3 3V.7H13V10.500H10.500" />
        </svg>
        <svg width="14" height="14" viewBox="0 0 14 14" className="mr-[17px] ml-[42px]">
          <path d="M.7 .7L13.300 13.300M13.300 .7L.7 13.300" stroke="#fff" strokeWidth="1.300" />
        </svg>
      </div>

      <div className="flex h-[46px] bg-[#f3f2f1] text-[16.500px] leading-[46px] tracking-[-0.05px] text-[#484644]">
        <div className="w-[81px] bg-[#f5f5f5] pl-[28px]">File</div>
        <div className="ml-[19px] flex w-[48px] flex-col font-bold">
          <span className="h-[42px] tracking-[-0.5px]">Home</span>
          <span className="h-[3px] bg-[#f2c811]" />
        </div>
        {tabs.map(([t, c]) => (
          <div key={t} className={c}>
            {t}
          </div>
        ))}
      </div>

      <Ribbon />

      <div className="flex h-[798px]">
        <div className="w-[51px] shrink-0 border-r border-[#e1dfdd]">
          <div className="flex h-[50px] items-center border-l-4 border-[#f2c811] pb-[2px] pl-[13px]">
            <svg width="18" height="18" viewBox="0 0 18 18" fill="none" stroke="#252423" strokeWidth="1.300">
              <path d="M.8 0V17H18M3.500 4.500H6.500V14H3.500ZM8.500 8H11V14H8.500ZM13 2.500H16V14H13Z" />
            </svg>
          </div>
          <div className="flex h-[48px] items-center justify-center pb-[2px] pl-px">
            <svg width="21" height="19" viewBox="0 0 21 19" fill="none" stroke="#605e5c" strokeWidth="1.300">
              <path d="M.7 .7H20.300V18.300H.7ZM.7 4.500H20.300M.7 9H20.300M.7 13.500H20.300M7 4.500V18M14 4.500V18" />
            </svg>
          </div>
          <div className="flex h-[52px] items-center justify-center pb-[2px] pl-px">
            <svg width="23" height="23" viewBox="0 0 23 23" fill="none" stroke="#605e5c" strokeWidth="1.300">
              <path d="M11 1H22V10H11ZM11 3.500H22M1 7H8V15H1ZM1 9.500H8M12 14H22V22H12ZM12 16.500H22M8 11H15V14M8 8V5H11M5 15V19H12" />
            </svg>
          </div>
        </div>

        <div className="w-[1421px] shrink-0">
          <div className="flex h-[45px] items-center bg-linear-to-b from-[#d6d4d2] via-[#f3f2f1] via-[7px] to-[#f3f2f1] pl-[15px]">
            <svg width="19" height="19" viewBox="0 0 19 19" fill="none" stroke="#484644" strokeWidth="1.200">
              <circle cx="9.500" cy="9.500" r="8.800" />
              <path d="M9.500 8V14M9.500 5V6.500" strokeWidth="1.500" />
            </svg>
            <span className="ml-[12px] flex-1 text-[14.500px] tracking-[-0.15px] text-[#484644]">
              Auto recovery contains some recovered files that haven't been opened.
            </span>
            <div className="flex h-[32px] w-[178px] items-center justify-center border border-[#c8c6c4] bg-white text-[14.500px] tracking-[-0.1px] text-[#323130]">
              View recovered files
            </div>
            <svg width="13" height="13" viewBox="0 0 13 13" className="mr-[15px] ml-[15px]">
              <path d="M.5 .5L12.500 12.500M12.500 .5L.5 12.500" stroke="#484644" strokeWidth="1.200" />
            </svg>
          </div>
          <div className="flex">
            <div className="h-[709px] w-[1171px] overflow-hidden bg-[#37003d]">
              <div className="flex h-[244px]">
                <div className="h-[244px] w-[533px] shrink-0 overflow-hidden border-r border-[#6b4070] font-['DejaVu_Serif_Condensed','DejaVu_Serif',serif] text-[92px] leading-[116px] tracking-[-2.300px] whitespace-nowrap text-white">
                  <div className="-mt-[38px] pl-[28px]">Data</div>
                  <div className="pl-[114px]">COVID-19</div>
                </div>
                <div className="border-b border-[#a67dab] bg-[#c497c9]">
                  <MapVisual />
                </div>
              </div>
              <div className="flex h-[371px] border-b-2 border-dotted border-[#7d7480]">
                <CountryTable />
                <Chart />
                <div className="w-px border-r border-dashed border-[#333]" />
              </div>
            </div>
            <FiltersPane />
          </div>
          <div className="flex h-[44px] border-t border-white bg-[#eaeaea]">
            <div className="flex w-[49px] items-center gap-[22px] pl-[7px]">
              <svg width="6" height="12" viewBox="0 0 6 12">
                <path d="M6 0V12L0 6Z" fill="#c8c8c8" />
              </svg>
              <svg width="6" height="12" viewBox="0 0 6 12">
                <path d="M0 0V12L6 6Z" fill="#c8c8c8" />
              </svg>
            </div>
            <div className="w-[96px] border-b-2 border-l border-b-[#f2c811] border-l-[#a19f9d] bg-white pl-px text-center text-[14px] leading-[43px] tracking-[-0.1px] text-[#323130]">
              Page 1
            </div>
            <div className="flex w-[49px] items-center justify-center bg-[#f2c811]">
              <svg width="14" height="14" viewBox="0 0 14 14">
                <path d="M7 0V14M0 7H14" stroke="#7a6f3c" strokeWidth="4" />
              </svg>
            </div>
          </div>
        </div>

        <VisualizationsPane />
        <FieldsPane />
      </div>

      <div className="h-[26px] pl-[6px] text-[13.500px] leading-[28px] tracking-[-0.1px] text-[#484644]">PAGE 1 OF 1</div>
      <Taskbar />
    </div>
  );
}
